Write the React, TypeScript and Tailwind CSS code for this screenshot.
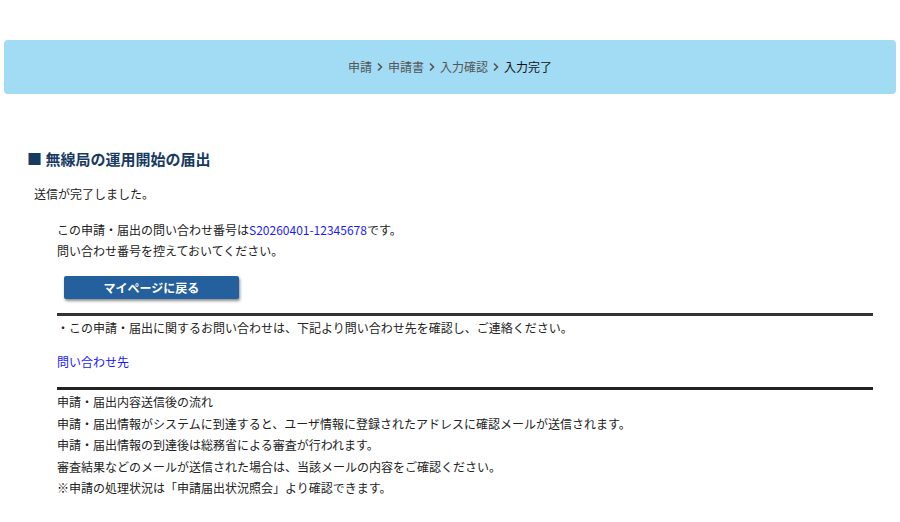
import React from "react";

const crumbs = ["申請", "申請書", "入力確認"];

const flowLines = [
  "申請・届出内容送信後の流れ",
  "申請・届出情報がシステムに到達すると、ユーザ情報に登録されたアドレスに確認メールが送信されます。",
  "申請・届出情報の到達後は総務省による審査が行われます。",
  "審査結果などのメールが送信された場合は、当該メールの内容をご確認ください。",
  "※申請の処理状況は「申請届出状況照会」より確認できます。",
];

const Chevron = () => (
  <svg width="8" height="10" viewBox="0 0 8 10" className="mx-[4px]">
    <path d="M2 1.5 L5.5 5 L2 8.5" fill="none" stroke="currentColor" strokeWidth="1.6" />
  </svg>
);

const App = () => {
  return (
    <div
      className="min-h-[522px] bg-white text-[12px] text-[#222]"
      style={{ fontFamily: '"Noto Sans CJK JP", "Noto Sans", sans-serif' }}
    >
      {/* breadcrumb banner */}
      <div className="pt-[40px] px-[4px]">
        <div className="h-[54px] rounded-[4px] bg-[#a2dbf4] flex items-center justify-center">
          <div className="flex items-center text-[12px] text-[#555]">
            {crumbs.map((c) => (
              <React.Fragment key={c}>
                <span>{c}</span>
                <Chevron />
              </React.Fragment>
            ))}
            <span className="text-[#111]">入力完了</span>
          </div>
        </div>
      </div>

      <h1 className="mt-[54px] ml-[27px] text-[15px] leading-[22px] font-bold text-[#173a63]">
        ■ 無線局の運用開始の届出
      </h1>

      <p className="mt-[13px] ml-[34px] leading-[22px]">送信が完了しました。</p>

      <div className="ml-[57px] mr-[27px] mt-[14px]">
        <p className="leading-[21px]">
          この申請・届出の問い合わせ番号は
          <span className="text-[#1a1aff]">S20260401-12345678</span>
          です。
        </p>
        <p className="leading-[21px]">問い合わせ番号を控えておいてください。</p>

        <button className="mt-[15px] ml-[7px] w-[175px] h-[23px] rounded-[2px] bg-[#245f9e] text-white font-bold text-[12px] shadow-[1px_2px_3px_rgba(0,0,0,0.45)]">
          マイページに戻る
        </button>

        <div className="mt-[14px] border-t-[3px] border-[#333]" />
        <p className="mt-[2px] leading-[20px]">・この申請・届出に関するお問い合わせは、下記より問い合わせ先を確認し、ご連絡ください。</p>
        <p className="mt-[14px] leading-[20px] text-[#1a1aff]">問い合わせ先</p>

        <div className="mt-[15px] border-t-[3px] border-[#222]" />
        <div className="mt-[1px]">
          {flowLines.map((l) => (
            <p key={l} className="leading-[21.5px]">
              {l}
            </p>
          ))}
        </div>
      </div>
    </div>
  );
};

export default App;
